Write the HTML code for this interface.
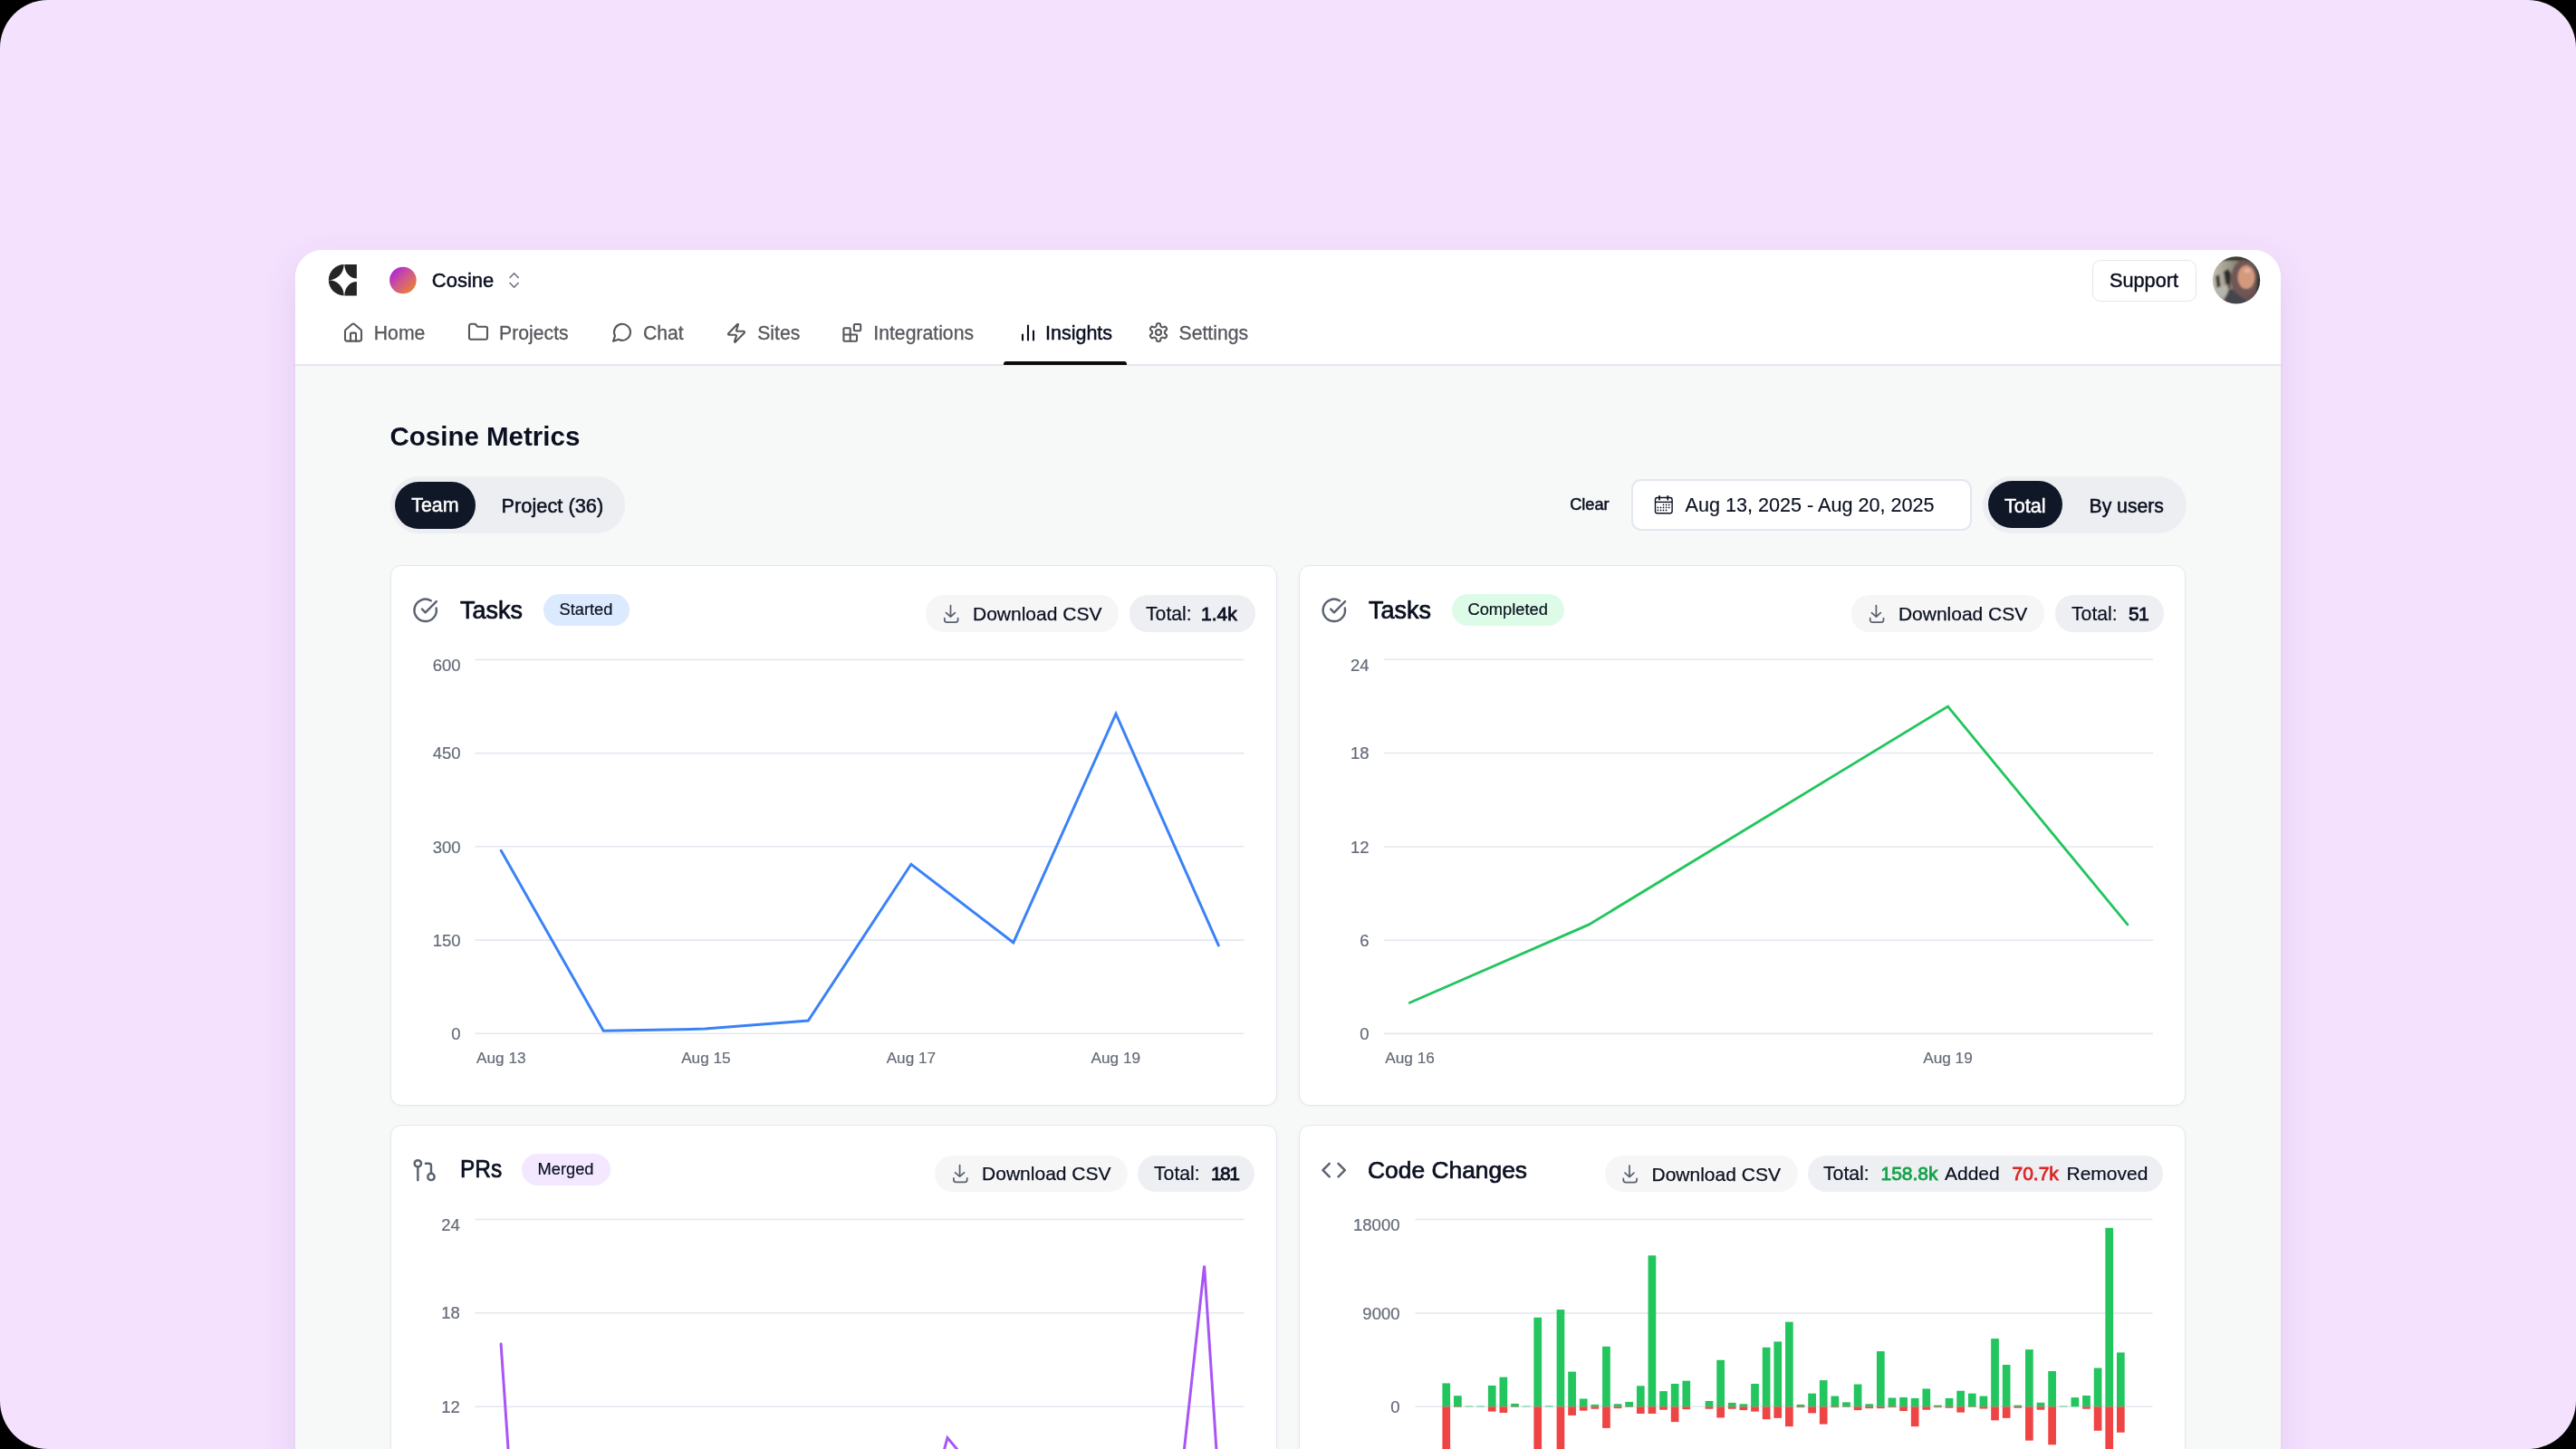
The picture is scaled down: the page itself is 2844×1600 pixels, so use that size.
<!DOCTYPE html>
<html><head><meta charset="utf-8"><style>
html,body{margin:0;padding:0;}
body{width:2844px;height:1600px;overflow:hidden;background:#000;position:relative;font-family:"Liberation Sans", sans-serif;}
#bg{position:absolute;left:0;top:0;width:2844px;height:1600px;background:#f4e1fe;border-radius:53px;overflow:hidden}
</style></head><body><div id="bg">
<div style="position:absolute;left:0;top:0;width:2844px;height:1600px;will-change:transform"><div style="position:absolute;left:326px;top:276px;width:2192px;height:1400px;background:#f7f8f8;border-radius:30px 30px 0 0;box-shadow:0 14px 40px rgba(110,50,150,0.12);overflow:hidden"><div style="position:absolute;left:0;top:0;width:100%;height:126px;background:#fff"></div><div style="position:absolute;left:0;top:126px;width:100%;height:2px;background:#e3e8ef"></div></div><div style="position:absolute;left:476.8px;top:299.18px;font-size:22px;line-height:22px;font-weight:400;color:#0b1020;white-space:pre;-webkit-text-stroke:0.5px #0b1020;">Cosine</div><div style="position:absolute;left:2310px;top:287px;width:115px;height:46px;background:#fff;border-radius:9px;border:1.7px solid #e3e8ef;box-sizing:border-box;"></div><div style="position:absolute;left:2329px;top:298.93px;font-size:21.7px;line-height:21.7px;font-weight:400;color:#0b1020;white-space:pre;-webkit-text-stroke:0.45px #0b1020;">Support</div><div style="position:absolute;left:412.8px;top:357.35px;font-size:21.2px;line-height:21.2px;font-weight:400;color:#55575c;white-space:pre;-webkit-text-stroke:0.3px #55575c;">Home</div><div style="position:absolute;left:551.1px;top:357.35px;font-size:21.2px;line-height:21.2px;font-weight:400;color:#55575c;white-space:pre;-webkit-text-stroke:0.3px #55575c;">Projects</div><div style="position:absolute;left:710px;top:357.35px;font-size:21.2px;line-height:21.2px;font-weight:400;color:#55575c;white-space:pre;-webkit-text-stroke:0.3px #55575c;">Chat</div><div style="position:absolute;left:836.2px;top:357.35px;font-size:21.2px;line-height:21.2px;font-weight:400;color:#55575c;white-space:pre;-webkit-text-stroke:0.3px #55575c;">Sites</div><div style="position:absolute;left:964.3px;top:357.35px;font-size:21.2px;line-height:21.2px;font-weight:400;color:#55575c;white-space:pre;-webkit-text-stroke:0.3px #55575c;">Integrations</div><div style="position:absolute;left:1301.5px;top:357.35px;font-size:21.2px;line-height:21.2px;font-weight:400;color:#55575c;white-space:pre;-webkit-text-stroke:0.3px #55575c;">Settings</div><div style="position:absolute;left:1154px;top:357.80px;font-size:21.5px;line-height:21.5px;font-weight:400;color:#0b1020;white-space:pre;-webkit-text-stroke:0.5px #0b1020;">Insights</div><div style="position:absolute;left:1107.5px;top:399px;width:136.5px;height:4px;background:#0b0b0b;border-radius:0px;border-radius:3px 3px 0 0;"></div><div style="position:absolute;left:430.5px;top:467.43px;font-size:29.5px;line-height:29.5px;font-weight:700;color:#0b1020;white-space:pre;">Cosine Metrics</div><div style="position:absolute;left:431px;top:525.5px;width:259px;height:63.5px;background:#eceef2;border-radius:32px;"></div><div style="position:absolute;left:436px;top:531.6px;width:89px;height:52.2px;background:#101828;border-radius:26px;"></div><div style="position:absolute;left:454.2px;top:547.88px;font-size:21.4px;line-height:21.4px;font-weight:400;color:#ffffff;white-space:pre;-webkit-text-stroke:0.5px #ffffff;">Team</div><div style="position:absolute;left:553.5px;top:547.55px;font-size:21.8px;line-height:21.8px;font-weight:400;color:#0b1020;white-space:pre;-webkit-text-stroke:0.5px #0b1020;">Project (36)</div><div style="position:absolute;left:1733.2px;top:548.19px;font-size:18.2px;line-height:18.2px;font-weight:400;color:#0b1020;white-space:pre;-webkit-text-stroke:0.5px #0b1020;">Clear</div><div style="position:absolute;left:1801px;top:529px;width:376px;height:57px;background:#fff;border-radius:11px;border:2px solid #e3e8ef;box-sizing:border-box;"></div><div style="position:absolute;left:1860.5px;top:547.12px;font-size:21.6px;line-height:21.6px;font-weight:400;color:#0b1020;white-space:pre;-webkit-text-stroke:0.15px #0b1020;">Aug 13, 2025 - Aug 20, 2025</div><div style="position:absolute;left:2189px;top:525.5px;width:224.5px;height:63.5px;background:#eceef2;border-radius:32px;"></div><div style="position:absolute;left:2194.5px;top:531.3px;width:82.5px;height:52.2px;background:#101828;border-radius:26px;"></div><div style="position:absolute;left:2213px;top:547.52px;font-size:21.6px;line-height:21.6px;font-weight:400;color:#ffffff;white-space:pre;-webkit-text-stroke:0.5px #ffffff;">Total</div><div style="position:absolute;left:2306.5px;top:547.85px;font-size:21.2px;line-height:21.2px;font-weight:400;color:#0b1020;white-space:pre;-webkit-text-stroke:0.5px #0b1020;">By users</div><div style="position:absolute;left:430.6px;top:624.4px;width:979.6px;height:596.8px;background:#fff;border-radius:12px;border:1.8px solid #e3e7f0;box-sizing:border-box;box-shadow:0 1px 3px rgba(0,0,0,0.04);"></div><div style="position:absolute;left:508px;top:660.84px;font-size:27px;line-height:27px;font-weight:400;color:#0b1020;white-space:pre;-webkit-text-stroke:0.7px #0b1020;">Tasks</div><div style="position:absolute;left:600px;top:656px;width:94.5px;height:35px;background:#dbeafe;border-radius:17.5px;"></div><div style="position:absolute;left:617.5px;top:664.01px;font-size:18.3px;line-height:18.3px;font-weight:400;color:#0b1020;white-space:pre;-webkit-text-stroke:0.2px #0b1020;">Started</div><div style="position:absolute;left:1022px;top:657.3px;width:213px;height:40.5px;background:#f6f6f7;border-radius:20px;"></div><div style="position:absolute;left:1074px;top:667.12px;font-size:21px;line-height:21px;font-weight:400;color:#0b1020;white-space:pre;-webkit-text-stroke:0.25px #0b1020;">Download CSV</div><div style="position:absolute;left:1246.8px;top:657.3px;width:139px;height:40.5px;background:#eeeff3;border-radius:20px;"></div><div style="position:absolute;left:1265px;top:666.95px;font-size:21.2px;line-height:21.2px;font-weight:400;color:#0b1020;white-space:pre;-webkit-text-stroke:0.2px #0b1020;">Total:</div><div style="position:absolute;left:1326px;top:667.12px;font-size:21px;line-height:21px;font-weight:400;color:#0b1020;white-space:pre;-webkit-text-stroke:0.8px #0b1020;">1.4k</div><div style="position:absolute;left:1433.6px;top:624.4px;width:979.6px;height:596.8px;background:#fff;border-radius:12px;border:1.8px solid #e3e7f0;box-sizing:border-box;box-shadow:0 1px 3px rgba(0,0,0,0.04);"></div><div style="position:absolute;left:1511px;top:660.84px;font-size:27px;line-height:27px;font-weight:400;color:#0b1020;white-space:pre;-webkit-text-stroke:0.7px #0b1020;">Tasks</div><div style="position:absolute;left:1603px;top:656px;width:124px;height:35px;background:#dcfce7;border-radius:17.5px;"></div><div style="position:absolute;left:1620.5px;top:664.01px;font-size:18.3px;line-height:18.3px;font-weight:400;color:#0b1020;white-space:pre;-webkit-text-stroke:0.2px #0b1020;">Completed</div><div style="position:absolute;left:2043.9px;top:657.3px;width:213px;height:40.5px;background:#f6f6f7;border-radius:20px;"></div><div style="position:absolute;left:2095.9px;top:667.12px;font-size:21px;line-height:21px;font-weight:400;color:#0b1020;white-space:pre;-webkit-text-stroke:0.25px #0b1020;">Download CSV</div><div style="position:absolute;left:2268.5px;top:657.3px;width:120.5px;height:40.5px;background:#eeeff3;border-radius:20px;"></div><div style="position:absolute;left:2287px;top:666.95px;font-size:21.2px;line-height:21.2px;font-weight:400;color:#0b1020;white-space:pre;-webkit-text-stroke:0.2px #0b1020;">Total:</div><div style="position:absolute;left:2350px;top:667.12px;font-size:21px;line-height:21px;font-weight:400;color:#0b1020;white-space:pre;-webkit-text-stroke:0.8px #0b1020;letter-spacing:-0.6px;">51</div><div style="position:absolute;left:430.6px;top:1242.4px;width:979.6px;height:596.8px;background:#fff;border-radius:12px;border:1.8px solid #e3e7f0;box-sizing:border-box;box-shadow:0 1px 3px rgba(0,0,0,0.04);"></div><div style="position:absolute;left:507.5px;top:1278.24px;font-size:27px;line-height:27px;font-weight:400;color:#0b1020;white-space:pre;-webkit-text-stroke:0.7px #0b1020;transform:scaleX(0.905);transform-origin:0 0;">PRs</div><div style="position:absolute;left:576.2px;top:1274px;width:98px;height:35px;background:#f3e8ff;border-radius:17.5px;"></div><div style="position:absolute;left:593.5px;top:1282.01px;font-size:18.3px;line-height:18.3px;font-weight:400;color:#0b1020;white-space:pre;-webkit-text-stroke:0.2px #0b1020;">Merged</div><div style="position:absolute;left:1032.1px;top:1275.5px;width:213px;height:40.5px;background:#f6f6f7;border-radius:20px;"></div><div style="position:absolute;left:1084.1px;top:1285.32px;font-size:21px;line-height:21px;font-weight:400;color:#0b1020;white-space:pre;-webkit-text-stroke:0.25px #0b1020;">Download CSV</div><div style="position:absolute;left:1256.3px;top:1275.5px;width:129px;height:40.5px;background:#eeeff3;border-radius:20px;"></div><div style="position:absolute;left:1274px;top:1285.15px;font-size:21.2px;line-height:21.2px;font-weight:400;color:#0b1020;white-space:pre;-webkit-text-stroke:0.2px #0b1020;">Total:</div><div style="position:absolute;left:1337px;top:1285.32px;font-size:21px;line-height:21px;font-weight:400;color:#0b1020;white-space:pre;-webkit-text-stroke:0.8px #0b1020;letter-spacing:-1.6px;">181</div><div style="position:absolute;left:1433.6px;top:1242.4px;width:979.6px;height:596.8px;background:#fff;border-radius:12px;border:1.8px solid #e3e7f0;box-sizing:border-box;box-shadow:0 1px 3px rgba(0,0,0,0.04);"></div><div style="position:absolute;left:1510px;top:1278.75px;font-size:26.4px;line-height:26.4px;font-weight:400;color:#0b1020;white-space:pre;-webkit-text-stroke:0.7px #0b1020;">Code Changes</div><div style="position:absolute;left:1771.5px;top:1275.9px;width:213px;height:40.5px;background:#f6f6f7;border-radius:20px;"></div><div style="position:absolute;left:1823.5px;top:1285.72px;font-size:21px;line-height:21px;font-weight:400;color:#0b1020;white-space:pre;-webkit-text-stroke:0.25px #0b1020;">Download CSV</div><div style="position:absolute;left:1996.2px;top:1275.9px;width:392px;height:40.5px;background:#eeeff3;border-radius:20px;"></div><div style="position:absolute;left:2013px;top:1285.15px;font-size:21.2px;line-height:21.2px;font-weight:400;color:#0b1020;white-space:pre;-webkit-text-stroke:0.2px #0b1020;">Total:</div><div style="position:absolute;left:2076.5px;top:1285.32px;font-size:21px;line-height:21px;font-weight:400;color:#16a34a;white-space:pre;-webkit-text-stroke:0.8px #16a34a;">158.8k</div><div style="position:absolute;left:2147px;top:1285.32px;font-size:21px;line-height:21px;font-weight:400;color:#0b1020;white-space:pre;-webkit-text-stroke:0.2px #0b1020;">Added</div><div style="position:absolute;left:2221.5px;top:1285.32px;font-size:21px;line-height:21px;font-weight:400;color:#dc2626;white-space:pre;-webkit-text-stroke:0.8px #dc2626;">70.7k</div><div style="position:absolute;left:2281.5px;top:1285.32px;font-size:21px;line-height:21px;font-weight:400;color:#0b1020;white-space:pre;-webkit-text-stroke:0.2px #0b1020;">Removed</div><div style="position:absolute;left:308.5px;width:200px;text-align:right;top:726.26px;font-size:18.5px;line-height:18.5px;color:#646b78;white-space:pre;-webkit-text-stroke:0.2px #646b78">600</div><div style="position:absolute;left:308.5px;width:200px;text-align:right;top:823.36px;font-size:18.5px;line-height:18.5px;color:#646b78;white-space:pre;-webkit-text-stroke:0.2px #646b78">450</div><div style="position:absolute;left:308.5px;width:200px;text-align:right;top:926.56px;font-size:18.5px;line-height:18.5px;color:#646b78;white-space:pre;-webkit-text-stroke:0.2px #646b78">300</div><div style="position:absolute;left:308.5px;width:200px;text-align:right;top:1029.86px;font-size:18.5px;line-height:18.5px;color:#646b78;white-space:pre;-webkit-text-stroke:0.2px #646b78">150</div><div style="position:absolute;left:308.5px;width:200px;text-align:right;top:1133.06px;font-size:18.5px;line-height:18.5px;color:#646b78;white-space:pre;-webkit-text-stroke:0.2px #646b78">0</div><div style="position:absolute;left:453.29999999999995px;width:200px;text-align:center;top:1159.84px;font-size:17.2px;line-height:17.2px;color:#646b78;white-space:pre;-webkit-text-stroke:0.2px #646b78">Aug 13</div><div style="position:absolute;left:679.4px;width:200px;text-align:center;top:1159.84px;font-size:17.2px;line-height:17.2px;color:#646b78;white-space:pre;-webkit-text-stroke:0.2px #646b78">Aug 15</div><div style="position:absolute;left:905.9px;width:200px;text-align:center;top:1159.84px;font-size:17.2px;line-height:17.2px;color:#646b78;white-space:pre;-webkit-text-stroke:0.2px #646b78">Aug 17</div><div style="position:absolute;left:1131.8px;width:200px;text-align:center;top:1159.84px;font-size:17.2px;line-height:17.2px;color:#646b78;white-space:pre;-webkit-text-stroke:0.2px #646b78">Aug 19</div><div style="position:absolute;left:1311.5px;width:200px;text-align:right;top:726.06px;font-size:18.5px;line-height:18.5px;color:#646b78;white-space:pre;-webkit-text-stroke:0.2px #646b78">24</div><div style="position:absolute;left:1311.5px;width:200px;text-align:right;top:823.26px;font-size:18.5px;line-height:18.5px;color:#646b78;white-space:pre;-webkit-text-stroke:0.2px #646b78">18</div><div style="position:absolute;left:1311.5px;width:200px;text-align:right;top:926.76px;font-size:18.5px;line-height:18.5px;color:#646b78;white-space:pre;-webkit-text-stroke:0.2px #646b78">12</div><div style="position:absolute;left:1311.5px;width:200px;text-align:right;top:1029.96px;font-size:18.5px;line-height:18.5px;color:#646b78;white-space:pre;-webkit-text-stroke:0.2px #646b78">6</div><div style="position:absolute;left:1311.5px;width:200px;text-align:right;top:1133.16px;font-size:18.5px;line-height:18.5px;color:#646b78;white-space:pre;-webkit-text-stroke:0.2px #646b78">0</div><div style="position:absolute;left:1456.6px;width:200px;text-align:center;top:1159.84px;font-size:17.2px;line-height:17.2px;color:#646b78;white-space:pre;-webkit-text-stroke:0.2px #646b78">Aug 16</div><div style="position:absolute;left:2050.5px;width:200px;text-align:center;top:1159.84px;font-size:17.2px;line-height:17.2px;color:#646b78;white-space:pre;-webkit-text-stroke:0.2px #646b78">Aug 19</div><div style="position:absolute;left:307.8px;width:200px;text-align:right;top:1344.26px;font-size:18.5px;line-height:18.5px;color:#646b78;white-space:pre;-webkit-text-stroke:0.2px #646b78">24</div><div style="position:absolute;left:307.8px;width:200px;text-align:right;top:1441.46px;font-size:18.5px;line-height:18.5px;color:#646b78;white-space:pre;-webkit-text-stroke:0.2px #646b78">18</div><div style="position:absolute;left:307.8px;width:200px;text-align:right;top:1544.96px;font-size:18.5px;line-height:18.5px;color:#646b78;white-space:pre;-webkit-text-stroke:0.2px #646b78">12</div><div style="position:absolute;left:1345.5px;width:200px;text-align:right;top:1344.26px;font-size:18.5px;line-height:18.5px;color:#646b78;white-space:pre;-webkit-text-stroke:0.2px #646b78">18000</div><div style="position:absolute;left:1345.5px;width:200px;text-align:right;top:1441.76px;font-size:18.5px;line-height:18.5px;color:#646b78;white-space:pre;-webkit-text-stroke:0.2px #646b78">9000</div><div style="position:absolute;left:1345.5px;width:200px;text-align:right;top:1545.06px;font-size:18.5px;line-height:18.5px;color:#646b78;white-space:pre;-webkit-text-stroke:0.2px #646b78">0</div></div>
<svg style="position:absolute;left:0;top:0" width="2844" height="1600" viewBox="0 0 2844 1600">
<g fill="#252525"><path d="M362.8 309.3 A17.1 17.1 0 0 1 379.7 292.1 A16.9 17.2 0 0 1 362.8 309.3Z"/><path d="M380.3 292.1 H393.9 V307.5 A13.6 15.4 0 0 1 380.3 292.1Z"/><path d="M393.9 311.1 V326.4 H380.3 A13.6 15.3 0 0 1 393.9 311.1Z"/><path d="M362.8 309.3 A16.9 17.1 0 0 1 379.7 326.4 A17.1 17.1 0 0 1 362.8 309.3Z"/></g><defs><linearGradient id="gc" x1="0" y1="0" x2="1" y2="1"><stop offset="0" stop-color="#a416f0"/><stop offset="0.5" stop-color="#d05a8a"/><stop offset="1" stop-color="#f38a1e"/></linearGradient></defs><circle cx="444.9" cy="309.5" r="14.8" fill="url(#gc)"/><path d="M563 306.5 L567.6 301.8 L572.2 306.5 M563 312.5 L567.6 317.2 L572.2 312.5" fill="none" stroke="#6b7280" stroke-width="1.6" stroke-linecap="round" stroke-linejoin="round"/><defs><clipPath id="av"><circle cx="2469" cy="309.4" r="26.2"/></clipPath><linearGradient id="avbg" x1="0" y1="0" x2="1" y2="0"><stop offset="0" stop-color="#c9c6b8"/><stop offset="0.45" stop-color="#8f8b78"/><stop offset="1" stop-color="#3a3a36"/></linearGradient><filter id="avb" x="-10%" y="-10%" width="120%" height="120%"><feGaussianBlur stdDeviation="1.0"/></filter></defs><g clip-path="url(#av)"><g filter="url(#avb)"><rect x="2440" y="280" width="60" height="60" fill="url(#avbg)"/><rect x="2440" y="280" width="60" height="8" fill="#3c3a33"/><path d="M2455 300 L2460 297 L2463 302 L2462 318 L2458 318 Z" fill="#2e2d2a"/><path d="M2446 305 L2450 303 L2452 320 L2448 322 Z" fill="#3a3935"/><path d="M2446 318 L2460 314 L2458 326 L2446 330 Z" fill="#b5b5ae"/><path d="M2494 300 L2500 300 L2500 340 L2490 340 Z" fill="#2b2b2b"/><ellipse cx="2477" cy="309" rx="14" ry="22" fill="#6f5656"/><path d="M2466 320 Q2478 338 2490 318 L2494 342 L2464 342 Z" fill="#6a5050"/><ellipse cx="2480" cy="306" rx="9.5" ry="13" fill="#d39a7e"/><ellipse cx="2481" cy="299" rx="3.5" ry="2.5" fill="#e6b49c"/><path d="M2450 342 L2462 318 L2482 334 L2486 342 Z" fill="#45454e"/></g></g><g transform="translate(378,355.6) scale(1.0)" fill="none" stroke="#55575c" stroke-width="2.1" stroke-linecap="round" stroke-linejoin="round" ><path d="M15 21v-8a1 1 0 0 0-1-1h-4a1 1 0 0 0-1 1v8"/><path d="M3 10a2 2 0 0 1 .709-1.528l7-5.999a2 2 0 0 1 2.582 0l7 5.999A2 2 0 0 1 21 10v9a2 2 0 0 1-2 2H5a2 2 0 0 1-2-2z"/></g><g transform="translate(516,354.8) scale(1.0)" fill="none" stroke="#55575c" stroke-width="2.1" stroke-linecap="round" stroke-linejoin="round" ><path d="M20 20a2 2 0 0 0 2-2V8a2 2 0 0 0-2-2h-7.9a2 2 0 0 1-1.69-.9L9.6 3.9A2 2 0 0 0 7.93 3H4a2 2 0 0 0-2 2v13a2 2 0 0 0 2 2Z"/></g><g transform="translate(675,354.8) scale(1.0)" fill="none" stroke="#55575c" stroke-width="2.1" stroke-linecap="round" stroke-linejoin="round" ><path d="M7.9 20A9 9 0 1 0 4 16.1L2 22Z"/></g><g transform="translate(801,355.8) scale(1.0)" fill="none" stroke="#55575c" stroke-width="2.1" stroke-linecap="round" stroke-linejoin="round" ><path d="M4 14a1 1 0 0 1-.78-1.63l9.9-10.2a.5.5 0 0 1 .86.46l-1.92 6.02A1 1 0 0 0 13 10h7a1 1 0 0 1 .78 1.63l-9.9 10.2a.5.5 0 0 1-.86-.46l1.92-6.02A1 1 0 0 0 11 14z"/></g><g transform="translate(928.3,354.9) scale(1.0416666666666667)" fill="none" stroke="#55575c" stroke-width="2.0" stroke-linecap="round" stroke-linejoin="round" ><rect width="7" height="7" x="14" y="3" rx="1"/><path d="M10 21V8a1 1 0 0 0-1-1H4a1 1 0 0 0-1 1v12a1 1 0 0 0 1 1h12a1 1 0 0 0 1-1v-5a1 1 0 0 0-1-1H3"/></g><g transform="translate(1123,355.5) scale(1.0)" fill="none" stroke="#0b1020" stroke-width="2.1" stroke-linecap="round" stroke-linejoin="round" ><line x1="18" x2="18" y1="20" y2="10"/><line x1="12" x2="12" y1="20" y2="4"/><line x1="6" x2="6" y1="20" y2="14"/></g><g transform="translate(1267,355) scale(1.0)" fill="none" stroke="#55575c" stroke-width="2.1" stroke-linecap="round" stroke-linejoin="round" ><path d="M12.22 2h-.44a2 2 0 0 0-2 2v.18a2 2 0 0 1-1 1.73l-.43.25a2 2 0 0 1-2 0l-.15-.08a2 2 0 0 0-2.73.73l-.22.38a2 2 0 0 0 .73 2.73l.15.1a2 2 0 0 1 1 1.72v.51a2 2 0 0 1-1 1.74l-.15.09a2 2 0 0 0-.73 2.73l.22.38a2 2 0 0 0 2.73.73l.15-.08a2 2 0 0 1 2 0l.43.25a2 2 0 0 1 1 1.73V20a2 2 0 0 0 2 2h.44a2 2 0 0 0 2-2v-.18a2 2 0 0 1 1-1.73l.43-.25a2 2 0 0 1 2 0l.15.08a2 2 0 0 0 2.73-.73l.22-.39a2 2 0 0 0-.73-2.73l-.15-.08a2 2 0 0 1-1-1.74v-.5a2 2 0 0 1 1-1.74l.15-.09a2 2 0 0 0 .73-2.73l-.22-.38a2 2 0 0 0-2.73-.73l-.15.08a2 2 0 0 1-2 0l-.43-.25a2 2 0 0 1-1-1.73V4a2 2 0 0 0-2-2z"/><circle cx="12" cy="12" r="3"/></g><g fill="none" stroke="#0b1020" stroke-width="1.4"><rect x="1827.5" y="549.5" width="18.6" height="17.2" rx="2.2"/><line x1="1827.5" y1="554.4" x2="1846.1" y2="554.4"/><line x1="1832" y1="547.8" x2="1832" y2="551.5" stroke-width="1.8" stroke-linecap="round"/><line x1="1841.3" y1="547.8" x2="1841.3" y2="551.5" stroke-width="1.8" stroke-linecap="round"/></g><g fill="#0b1020"><circle cx="1836.5" cy="557.4" r="0.85"/><circle cx="1839.6" cy="557.4" r="0.85"/><circle cx="1842.7" cy="557.4" r="0.85"/><circle cx="1830.4" cy="560.4" r="0.85"/><circle cx="1833.5" cy="560.4" r="0.85"/><circle cx="1836.5" cy="560.4" r="0.85"/><circle cx="1839.6" cy="560.4" r="0.85"/><circle cx="1842.7" cy="560.4" r="0.85"/><circle cx="1830.4" cy="563.4" r="0.85"/><circle cx="1833.5" cy="563.4" r="0.85"/><circle cx="1836.5" cy="563.4" r="0.85"/><circle cx="1839.6" cy="563.4" r="0.85"/></g><g transform="translate(455,659.2) scale(1.2208333333333334)" fill="none" stroke="#5b6270" stroke-width="2.0" stroke-linecap="round" stroke-linejoin="round" ><path d="M21.801 10A10 10 0 1 1 17 3.335"/><path d="m9 11 3 3L22 4"/></g><g fill="none" stroke="#5b6270" stroke-width="1.75" stroke-linecap="round" stroke-linejoin="round"><path d="M1049.5 668.4999999999999 V680.8 M1044.5 676.5999999999999 L1049.5 680.9999999999999 L1054.4 676.5999999999999"/><path d="M1042.8000000000002 682.6999999999999 V684.4999999999999 A2.6 2.6 0 0 0 1045.4 687.0999999999999 H1055.0 A2.6 2.6 0 0 0 1057.6000000000001 684.4999999999999 V682.6999999999999"/></g><g transform="translate(1458.2,659.2) scale(1.2208333333333334)" fill="none" stroke="#5b6270" stroke-width="2.0" stroke-linecap="round" stroke-linejoin="round" ><path d="M21.801 10A10 10 0 1 1 17 3.335"/><path d="m9 11 3 3L22 4"/></g><g fill="none" stroke="#5b6270" stroke-width="1.75" stroke-linecap="round" stroke-linejoin="round"><path d="M2071.4 668.4999999999999 V680.8 M2066.4 676.5999999999999 L2071.4 680.9999999999999 L2076.3 676.5999999999999"/><path d="M2064.7000000000003 682.6999999999999 V684.4999999999999 A2.6 2.6 0 0 0 2067.3 687.0999999999999 H2076.9 A2.6 2.6 0 0 0 2079.5 684.4999999999999 V682.6999999999999"/></g><g transform="translate(454,1277.5) scale(1.2208333333333334)" fill="none" stroke="#5b6270" stroke-width="2.0" stroke-linecap="round" stroke-linejoin="round" ><circle cx="18" cy="18" r="3"/><circle cx="6" cy="6" r="3"/><path d="M13 6h3a2 2 0 0 1 2 2v7"/><line x1="6" x2="6" y1="9" y2="21"/></g><g fill="none" stroke="#5b6270" stroke-width="1.75" stroke-linecap="round" stroke-linejoin="round"><path d="M1059.6 1286.7 V1299.0 M1054.6 1294.8000000000002 L1059.6 1299.2 L1064.5 1294.8000000000002"/><path d="M1052.9 1300.9 V1302.7 A2.6 2.6 0 0 0 1055.5 1305.3000000000002 H1065.1 A2.6 2.6 0 0 0 1067.7 1302.7 V1300.9"/></g><g transform="translate(1458,1277.5) scale(1.2208333333333334)" fill="none" stroke="#5b6270" stroke-width="2.0" stroke-linecap="round" stroke-linejoin="round" ><polyline points="16 18 22 12 16 6"/><polyline points="8 6 2 12 8 18"/></g><g fill="none" stroke="#5b6270" stroke-width="1.75" stroke-linecap="round" stroke-linejoin="round"><path d="M1799.0 1287.1000000000001 V1299.4 M1794.0 1295.2000000000003 L1799.0 1299.6000000000001 L1803.9 1295.2000000000003"/><path d="M1792.3000000000002 1301.3000000000002 V1303.1000000000001 A2.6 2.6 0 0 0 1794.9 1305.7000000000003 H1804.5 A2.6 2.6 0 0 0 1807.1000000000001 1303.1000000000001 V1301.3000000000002"/></g><line x1="524.5" y1="728.5" x2="1373.8" y2="728.5" stroke="#e3e8ef" stroke-width="1.6"/><line x1="524.5" y1="831.6" x2="1373.8" y2="831.6" stroke="#e3e8ef" stroke-width="1.6"/><line x1="524.5" y1="934.8" x2="1373.8" y2="934.8" stroke="#e3e8ef" stroke-width="1.6"/><line x1="524.5" y1="1038.1" x2="1373.8" y2="1038.1" stroke="#e3e8ef" stroke-width="1.6"/><line x1="524.5" y1="1141.3" x2="1373.8" y2="1141.3" stroke="#e3e8ef" stroke-width="1.6"/><polyline fill="none" stroke="#3b82f6" stroke-width="3" stroke-linecap="round" stroke-linejoin="miter" points="553.2,939.2 666.2,1138.3 778.3,1136.1 892.3,1127.1 1005.9,954.3 1118.8,1040.8 1232,788.2 1345.3,1043.9"/><line x1="1528" y1="728.3" x2="2377.2" y2="728.3" stroke="#e3e8ef" stroke-width="1.6"/><line x1="1528" y1="831.5" x2="2377.2" y2="831.5" stroke="#e3e8ef" stroke-width="1.6"/><line x1="1528" y1="935" x2="2377.2" y2="935" stroke="#e3e8ef" stroke-width="1.6"/><line x1="1528" y1="1038.2" x2="2377.2" y2="1038.2" stroke="#e3e8ef" stroke-width="1.6"/><line x1="1528" y1="1141.4" x2="2377.2" y2="1141.4" stroke="#e3e8ef" stroke-width="1.6"/><polyline fill="none" stroke="#22c55e" stroke-width="2.8" stroke-linecap="round" points="1556.3,1107.2 1754.3,1020.9 1952.5,900.5 2150.5,780 2348.9,1020.9"/><line x1="524.3" y1="1346.5" x2="1373.8" y2="1346.5" stroke="#e3e8ef" stroke-width="1.6"/><line x1="524.3" y1="1449.7" x2="1373.8" y2="1449.7" stroke="#e3e8ef" stroke-width="1.6"/><line x1="524.3" y1="1553.2" x2="1373.8" y2="1553.2" stroke="#e3e8ef" stroke-width="1.6"/><polyline fill="none" stroke="#a855f7" stroke-width="3" stroke-linecap="round" points="553.1,1484.1 572,1760 1000,1760 1046,1587.6 1090,1640 1290,1760 1329.6,1397.7 1345,1632"/><line x1="1562.3" y1="1346.5" x2="2376.5" y2="1346.5" stroke="#e3e8ef" stroke-width="1.6"/><line x1="1562.3" y1="1450" x2="2376.5" y2="1450" stroke="#e3e8ef" stroke-width="1.6"/><line x1="1562.3" y1="1553.3" x2="2376.5" y2="1553.3" stroke="#e3e8ef" stroke-width="1.6"/><g fill="#22c55e"><rect x="1592.40" y="1527.40" width="8.7" height="25.90"/><rect x="1605.02" y="1541.18" width="8.7" height="12.12"/><rect x="1617.64" y="1552.63" width="8.7" height="0.67"/><rect x="1630.26" y="1552.63" width="8.7" height="0.67"/><rect x="1642.88" y="1529.92" width="8.7" height="23.38"/><rect x="1655.50" y="1520.61" width="8.7" height="32.69"/><rect x="1668.12" y="1549.91" width="8.7" height="3.39"/><rect x="1680.74" y="1552.63" width="8.7" height="0.67"/><rect x="1693.36" y="1454.81" width="8.7" height="98.49"/><rect x="1705.98" y="1552.44" width="8.7" height="0.86"/><rect x="1718.60" y="1446.07" width="8.7" height="107.23"/><rect x="1731.22" y="1514.59" width="8.7" height="38.71"/><rect x="1743.84" y="1544.48" width="8.7" height="8.82"/><rect x="1756.46" y="1550.89" width="8.7" height="2.41"/><rect x="1769.08" y="1486.83" width="8.7" height="66.47"/><rect x="1781.70" y="1550.30" width="8.7" height="3.00"/><rect x="1794.32" y="1547.97" width="8.7" height="5.33"/><rect x="1806.94" y="1530.31" width="8.7" height="22.99"/><rect x="1819.56" y="1386.29" width="8.7" height="167.01"/><rect x="1832.18" y="1536.13" width="8.7" height="17.17"/><rect x="1844.80" y="1527.98" width="8.7" height="25.32"/><rect x="1857.42" y="1524.68" width="8.7" height="28.62"/><rect x="1882.66" y="1547.00" width="8.7" height="6.30"/><rect x="1895.28" y="1501.78" width="8.7" height="51.52"/><rect x="1907.90" y="1548.94" width="8.7" height="4.36"/><rect x="1920.52" y="1550.30" width="8.7" height="3.00"/><rect x="1933.14" y="1527.98" width="8.7" height="25.32"/><rect x="1945.76" y="1487.80" width="8.7" height="65.50"/><rect x="1958.38" y="1481.40" width="8.7" height="71.90"/><rect x="1971.00" y="1459.66" width="8.7" height="93.64"/><rect x="1983.62" y="1550.89" width="8.7" height="2.41"/><rect x="1996.24" y="1538.66" width="8.7" height="14.64"/><rect x="2008.86" y="1524.10" width="8.7" height="29.20"/><rect x="2021.48" y="1541.57" width="8.7" height="11.73"/><rect x="2034.10" y="1548.36" width="8.7" height="4.94"/><rect x="2046.72" y="1528.56" width="8.7" height="24.74"/><rect x="2059.34" y="1550.30" width="8.7" height="3.00"/><rect x="2071.96" y="1492.07" width="8.7" height="61.23"/><rect x="2084.58" y="1543.51" width="8.7" height="9.79"/><rect x="2097.20" y="1542.93" width="8.7" height="10.37"/><rect x="2109.82" y="1543.90" width="8.7" height="9.40"/><rect x="2122.44" y="1533.42" width="8.7" height="19.88"/><rect x="2135.06" y="1551.66" width="8.7" height="1.64"/><rect x="2147.68" y="1543.90" width="8.7" height="9.40"/><rect x="2160.30" y="1535.75" width="8.7" height="17.55"/><rect x="2172.92" y="1538.66" width="8.7" height="14.64"/><rect x="2185.54" y="1541.57" width="8.7" height="11.73"/><rect x="2198.16" y="1478.10" width="8.7" height="75.20"/><rect x="2210.78" y="1507.02" width="8.7" height="46.28"/><rect x="2223.40" y="1551.66" width="8.7" height="1.64"/><rect x="2236.02" y="1490.13" width="8.7" height="63.17"/><rect x="2248.64" y="1548.75" width="8.7" height="4.55"/><rect x="2261.26" y="1514.01" width="8.7" height="39.29"/><rect x="2273.88" y="1552.63" width="8.7" height="0.67"/><rect x="2286.50" y="1543.12" width="8.7" height="10.18"/><rect x="2299.12" y="1540.99" width="8.7" height="12.31"/><rect x="2311.74" y="1510.51" width="8.7" height="42.79"/><rect x="2324.36" y="1355.82" width="8.7" height="197.48"/><rect x="2336.98" y="1493.43" width="8.7" height="59.87"/></g><g fill="#ef4444"><rect x="1592.40" y="1553.30" width="8.7" height="67.85"/><rect x="1605.02" y="1553.30" width="8.7" height="0.50"/><rect x="1642.88" y="1553.30" width="8.7" height="5.35"/><rect x="1655.50" y="1553.30" width="8.7" height="6.71"/><rect x="1668.12" y="1553.30" width="8.7" height="0.50"/><rect x="1693.36" y="1553.30" width="8.7" height="67.85"/><rect x="1718.60" y="1553.30" width="8.7" height="67.85"/><rect x="1731.22" y="1553.30" width="8.7" height="9.62"/><rect x="1743.84" y="1553.30" width="8.7" height="4.38"/><rect x="1756.46" y="1553.30" width="8.7" height="2.44"/><rect x="1769.08" y="1553.30" width="8.7" height="23.59"/><rect x="1781.70" y="1553.30" width="8.7" height="1.86"/><rect x="1794.32" y="1553.30" width="8.7" height="0.50"/><rect x="1806.94" y="1553.30" width="8.7" height="7.68"/><rect x="1819.56" y="1553.30" width="8.7" height="7.68"/><rect x="1832.18" y="1553.30" width="8.7" height="3.41"/><rect x="1844.80" y="1553.30" width="8.7" height="16.80"/><rect x="1857.42" y="1553.30" width="8.7" height="2.83"/><rect x="1882.66" y="1553.30" width="8.7" height="2.44"/><rect x="1895.28" y="1553.30" width="8.7" height="12.14"/><rect x="1907.90" y="1553.30" width="8.7" height="2.44"/><rect x="1920.52" y="1553.30" width="8.7" height="3.80"/><rect x="1933.14" y="1553.30" width="8.7" height="5.35"/><rect x="1945.76" y="1553.30" width="8.7" height="13.89"/><rect x="1958.38" y="1553.30" width="8.7" height="12.53"/><rect x="1971.00" y="1553.30" width="8.7" height="21.85"/><rect x="1983.62" y="1553.30" width="8.7" height="0.88"/><rect x="1996.24" y="1553.30" width="8.7" height="7.10"/><rect x="2008.86" y="1553.30" width="8.7" height="19.32"/><rect x="2021.48" y="1553.30" width="8.7" height="0.88"/><rect x="2034.10" y="1553.30" width="8.7" height="0.50"/><rect x="2046.72" y="1553.30" width="8.7" height="3.80"/><rect x="2059.34" y="1553.30" width="8.7" height="1.86"/><rect x="2071.96" y="1553.30" width="8.7" height="1.86"/><rect x="2084.58" y="1553.30" width="8.7" height="0.88"/><rect x="2097.20" y="1553.30" width="8.7" height="4.77"/><rect x="2109.82" y="1553.30" width="8.7" height="21.85"/><rect x="2122.44" y="1553.30" width="8.7" height="3.41"/><rect x="2135.06" y="1553.30" width="8.7" height="0.88"/><rect x="2147.68" y="1553.30" width="8.7" height="1.47"/><rect x="2160.30" y="1553.30" width="8.7" height="6.32"/><rect x="2172.92" y="1553.30" width="8.7" height="0.50"/><rect x="2185.54" y="1553.30" width="8.7" height="2.24"/><rect x="2198.16" y="1553.30" width="8.7" height="15.05"/><rect x="2210.78" y="1553.30" width="8.7" height="12.53"/><rect x="2223.40" y="1553.30" width="8.7" height="1.47"/><rect x="2236.02" y="1553.30" width="8.7" height="37.38"/><rect x="2248.64" y="1553.30" width="8.7" height="3.41"/><rect x="2261.26" y="1553.30" width="8.7" height="42.03"/><rect x="2299.12" y="1553.30" width="8.7" height="2.44"/><rect x="2311.74" y="1553.30" width="8.7" height="26.51"/><rect x="2324.36" y="1553.30" width="8.7" height="67.85"/><rect x="2336.98" y="1553.30" width="8.7" height="28.45"/></g>
</svg>
</div></body></html>
